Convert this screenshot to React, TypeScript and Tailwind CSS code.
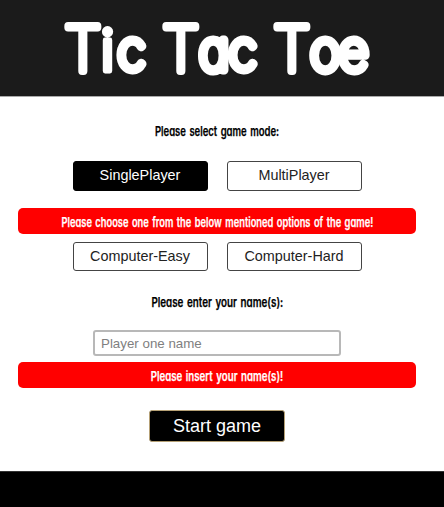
import type { ReactNode } from "react";

const hand = "font-['Inter',sans-serif] [font-feature-settings:'cv11']";

function Note({ children, className }: { children: ReactNode; className: string }) {
  return (
    <span
      className={`inline-block whitespace-nowrap text-[13px] leading-[26px] font-semibold [word-spacing:1.5px] [-webkit-text-stroke:0.25px_currentColor] ${hand} ${className}`}
    >
      {children}
    </span>
  );
}

function Option({ label, active = false, className }: { label: string; active?: boolean; className: string }) {
  return (
    <button
      className={`w-[135px] rounded-[3px] border text-[14.4px] leading-none ${className} ${
        active ? "border-black bg-black text-white" : "border-[#444] bg-white text-[#222]"
      }`}
    >
      {label}
    </button>
  );
}

function Alert({ children }: { children: ReactNode }) {
  return (
    <div className="flex h-[26px] w-[398px] items-center justify-center rounded-[5px] bg-[#ff0000] pt-0.5 text-white">
      {children}
    </div>
  );
}

function Title() {
  return (
    <svg
      width="444"
      height="96"
      viewBox="0 0 444 96"
      role="img"
      aria-label="Tic Tac Toe"
      className={`${hand} fill-white stroke-white font-thin text-[54px]`}
      strokeLinejoin="round"
      strokeLinecap="round"
      strokeWidth="9"
    >
      <g transform="scale(0.96 1)">
        <text>
          <tspan x="67.2" y="71.3" className="text-[62px]" strokeWidth="8">T</tspan>
          <tspan x="105.3" y="71.5" className="text-[56px] font-normal" strokeWidth="4.8">i</tspan>
          <tspan x="122.5" y="70.3">c</tspan>
        </text>
        <text>
          <tspan x="169.3" y="71.3" className="text-[62px]" strokeWidth="8">T</tspan>
          <tspan x="207.3 238.3" y="70.3">ac</tspan>
        </text>
        <text>
          <tspan x="284.9" y="71.3" className="text-[62px]" strokeWidth="8">T</tspan>
          <tspan x="323.3 353" y="70.3">oe</tspan>
        </text>
      </g>
    </svg>
  );
}

export default function App() {
  return (
    <div className="flex h-[507px] w-[444px] flex-col overflow-hidden bg-white font-['Liberation_Sans',Arial,sans-serif]">
      <header className="h-[97px] shrink-0 border-b border-[#aaa] bg-[#1b1b1b]">
        <Title />
      </header>
      <main className="flex h-[374px] w-[434px] shrink-0 flex-col items-center">
        <div className="mt-[21px] flex h-[26px] justify-center text-black">
          <Note className="scale-x-[0.73]">Please select game mode:</Note>
        </div>
        <div className="mt-[17px] flex gap-[19px]">
          <Option label="SinglePlayer" active className="h-[30px] pb-0.5" />
          <Option label="MultiPlayer" className="h-[30px] pb-0.5" />
        </div>
        <div className="mt-[17px]">
          <Alert>
            <Note className="scale-x-[0.717]">Please choose one from the below mentioned options of the game!</Note>
          </Alert>
        </div>
        <div className="mt-[8px] flex gap-[19px]">
          <Option label="Computer-Easy" className="h-[29px]" />
          <Option label="Computer-Hard" className="h-[29px]" />
        </div>
        <div className="mt-[18px] flex h-[26px] justify-center text-black">
          <Note className="scale-x-[0.755]">Please enter your name(s):</Note>
        </div>
        <input
          className="mt-[15px] h-[26px] w-[248px] shrink-0 rounded-[3px] border-2 border-[#b8b8b8] px-1.5 text-[13.33px] placeholder:text-[#7f7f7f]"
          placeholder="Player one name"
        />
        <div className="mt-[6px]">
          <Alert>
            <Note className="scale-x-[0.745]">Please insert your name(s)!</Note>
          </Alert>
        </div>
        <button className="mt-[22px] h-[32px] w-[136px] rounded-[3px] border border-[#b5a075] bg-black text-[18px] leading-none text-white">
          Start game
        </button>
      </main>
      <footer className="flex-1 border-t border-[#333] bg-black" />
    </div>
  );
}
